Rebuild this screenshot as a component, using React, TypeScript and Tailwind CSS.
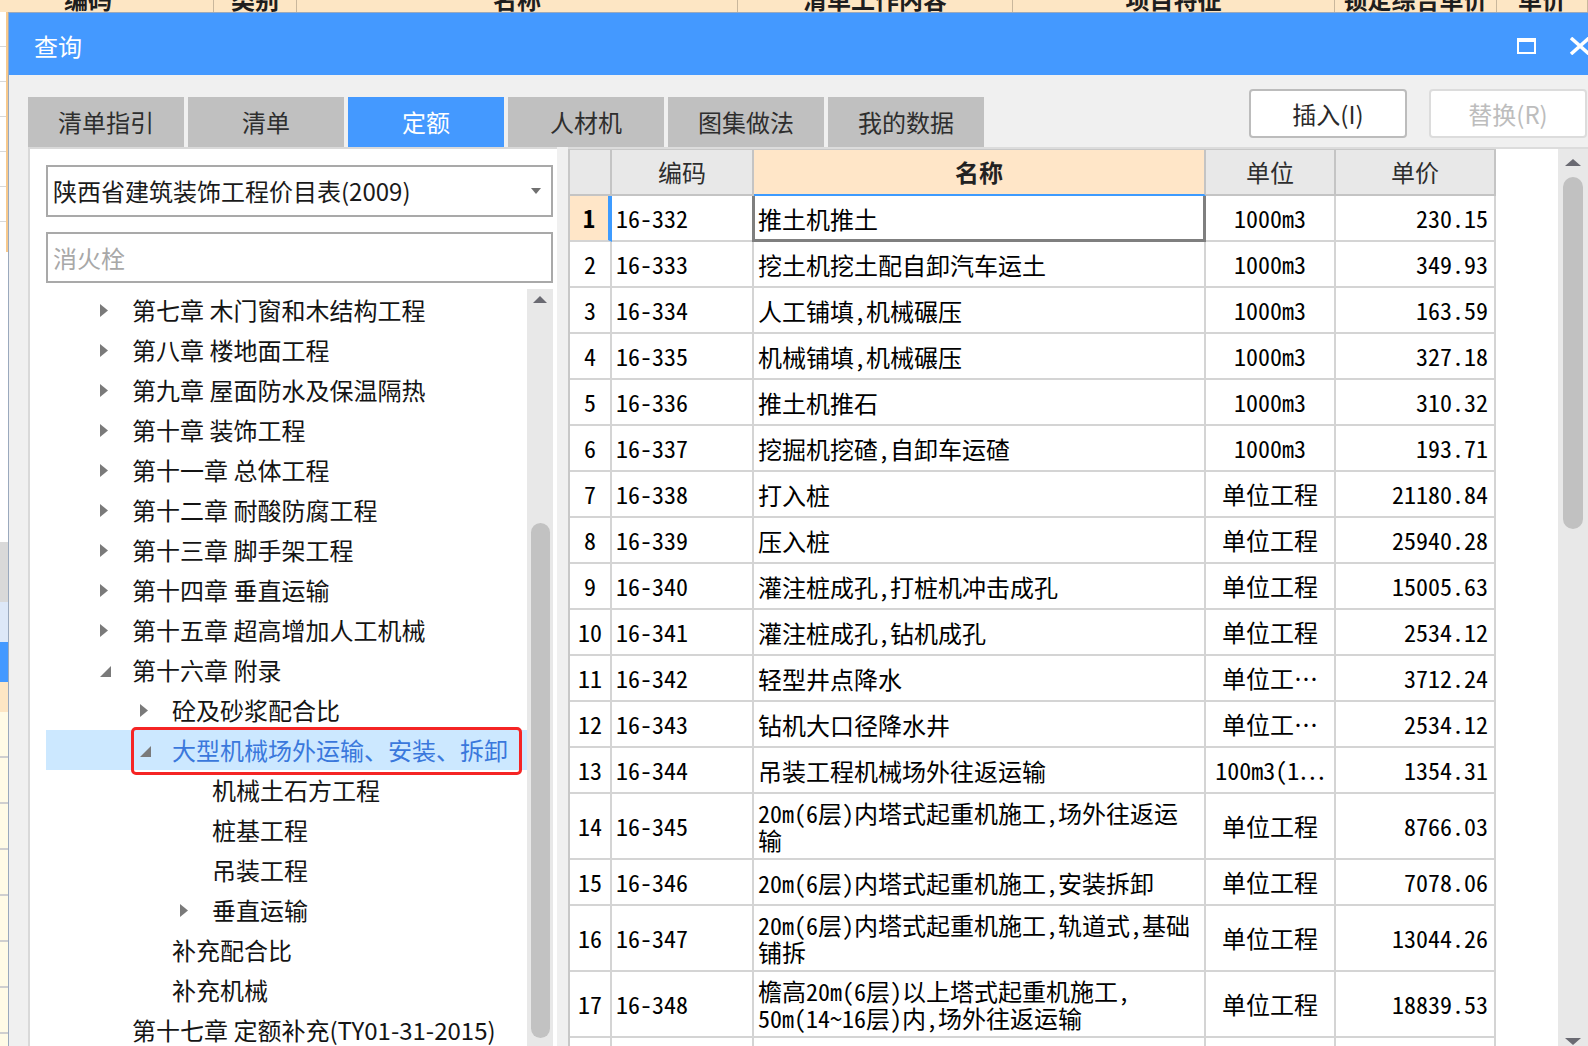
import React from "react";

const tabs = ["清单指引", "清单", "定额", "人材机", "图集做法", "我的数据"];

type TreeItem = { l: number; a: "r" | "d" | "n"; t: string; sel?: boolean };

const tree: TreeItem[] = [
  { l: 0, a: "r", t: "第七章 木门窗和木结构工程" },
  { l: 0, a: "r", t: "第八章 楼地面工程" },
  { l: 0, a: "r", t: "第九章 屋面防水及保温隔热" },
  { l: 0, a: "r", t: "第十章 装饰工程" },
  { l: 0, a: "r", t: "第十一章 总体工程" },
  { l: 0, a: "r", t: "第十二章 耐酸防腐工程" },
  { l: 0, a: "r", t: "第十三章 脚手架工程" },
  { l: 0, a: "r", t: "第十四章 垂直运输" },
  { l: 0, a: "r", t: "第十五章 超高增加人工机械" },
  { l: 0, a: "d", t: "第十六章 附录" },
  { l: 1, a: "r", t: "砼及砂浆配合比" },
  { l: 1, a: "d", t: "大型机械场外运输、安装、拆卸", sel: true },
  { l: 2, a: "n", t: "机械土石方工程" },
  { l: 2, a: "n", t: "桩基工程" },
  { l: 2, a: "n", t: "吊装工程" },
  { l: 2, a: "r", t: "垂直运输" },
  { l: 1, a: "n", t: "补充配合比" },
  { l: 1, a: "n", t: "补充机械" },
  { l: 0, a: "n", t: "第十七章 定额补充(TY01-31-2015)" },
];

type Row = { code: string; name: string; unit: string; price: string };

const rows: Row[] = [
  { code: "16-332", name: "推土机推土", unit: "1000m3", price: "230.15" },
  { code: "16-333", name: "挖土机挖土配自卸汽车运土", unit: "1000m3", price: "349.93" },
  { code: "16-334", name: "人工铺填,机械碾压", unit: "1000m3", price: "163.59" },
  { code: "16-335", name: "机械铺填,机械碾压", unit: "1000m3", price: "327.18" },
  { code: "16-336", name: "推土机推石", unit: "1000m3", price: "310.32" },
  { code: "16-337", name: "挖掘机挖碴,自卸车运碴", unit: "1000m3", price: "193.71" },
  { code: "16-338", name: "打入桩", unit: "单位工程", price: "21180.84" },
  { code: "16-339", name: "压入桩", unit: "单位工程", price: "25940.28" },
  { code: "16-340", name: "灌注桩成孔,打桩机冲击成孔", unit: "单位工程", price: "15005.63" },
  { code: "16-341", name: "灌注桩成孔,钻机成孔", unit: "单位工程", price: "2534.12" },
  { code: "16-342", name: "轻型井点降水", unit: "单位工…", price: "3712.24" },
  { code: "16-343", name: "钻机大口径降水井", unit: "单位工…", price: "2534.12" },
  { code: "16-344", name: "吊装工程机械场外往返运输", unit: "100m3(1…", price: "1354.31" },
  { code: "16-345", name: "20m(6层)内塔式起重机施工,场外往返运\n输", unit: "单位工程", price: "8766.03" },
  { code: "16-346", name: "20m(6层)内塔式起重机施工,安装拆卸", unit: "单位工程", price: "7078.06" },
  { code: "16-347", name: "20m(6层)内塔式起重机施工,轨道式,基础\n铺拆", unit: "单位工程", price: "13044.26" },
  { code: "16-348", name: "檐高20m(6层)以上塔式起重机施工,\n50m(14~16层)内,场外往返运输", unit: "单位工程", price: "18839.53" },
  { code: "16-349", name: "檐高20m(6层)以上塔式起重机施工,\n50m(14~16层)内,安装拆卸", unit: "单位工程", price: "15263.40" },
];

const padByLevel = ["pl-[50px]", "pl-[90px]", "pl-[130px]"];

function RightArrow() {
  return (
    <svg width="8" height="13" viewBox="0 0 8 13">
      <polygon points="0,0 8,6.5 0,13" fill="#7a7a7a" />
    </svg>
  );
}

function DownArrow() {
  return (
    <svg width="11" height="11" viewBox="0 0 11 11" className="mt-[3px]">
      <polygon points="11,0 11,11 0,11" fill="#7a7a7a" />
    </svg>
  );
}

function TopStrip() {
  const cols = [
    { w: "w-[214px]", t: "编码", c: "justify-start pl-[64px]" },
    { w: "w-[83px]", t: "类别", c: "justify-center" },
    { w: "w-[441px]", t: "名称", c: "justify-center" },
    { w: "w-[275px]", t: "清单工作内容", c: "justify-center" },
    { w: "w-[322px]", t: "项目特征", c: "justify-center" },
    { w: "w-[162px]", t: "锁定综合单价", c: "justify-center" },
    { w: "w-[91px]", t: "单价", c: "justify-center" },
  ];
  return (
    <div className="flex h-[12px] overflow-hidden bg-[#fde6c4]">
      {cols.map((c, i) => (
        <div key={i} className={`flex ${c.w} ${c.c} shrink-0 border-r border-[#c9b79c]`}>
          <span className="mt-[-13px] text-[24px] font-bold leading-[24px] text-[#1e1e1e]">{c.t}</span>
        </div>
      ))}
    </div>
  );
}

function LeftStrip() {
  return (
    <div className="flex w-[8px] flex-col">
      <div className="h-[240px] border-r-2 border-[#f7c98c] bg-[repeating-linear-gradient(to_bottom,#ffffff_0px,#ffffff_34px,#d8d8d8_34px,#d8d8d8_35px)]" />
      <div className="h-[290px] bg-white" />
      <div className="h-[60px] bg-[#d9d9d9]" />
      <div className="h-[40px] bg-[#dde8f8]" />
      <div className="h-[40px] bg-[#4499ff]" />
      <div className="h-[30px] bg-[#fde6c4]" />
      <div className="flex-1 bg-[repeating-linear-gradient(to_bottom,#fffbe6_0px,#fffbe6_44px,#cfcfcf_44px,#cfcfcf_46px)]" />
    </div>
  );
}

function TreeRow({ item }: { item: TreeItem }) {
  return (
    <div
      className={`relative flex h-[40px] items-center ${padByLevel[item.l]} ${
        item.sel ? "bg-[#cce8ff]" : ""
      }`}
    >
      <div className="flex w-[20px] items-center pl-[4px]">
        {item.a === "r" && <RightArrow />}
        {item.a === "d" && <DownArrow />}
      </div>
      <span
        className={`ml-[16px] whitespace-nowrap text-[24px] leading-[40px] ${
          item.sel ? "text-[#3a78dc]" : "text-[#141414]"
        }`}
      >
        {item.t}
      </span>
      {item.sel && (
        <div className="pointer-events-none absolute bottom-[-5px] left-[85px] right-[5px] top-[-3px] rounded-[5px] border-[3px] border-[#f52424]" />
      )}
    </div>
  );
}

const mono = "font-['Noto_Sans_Mono_CJK_SC','Noto_Sans_CJK_SC',monospace]";

function DataRow({ r, idx }: { r: Row; idx: number }) {
  const tall = r.name.includes("\n");
  const h = tall ? "h-[66px]" : "h-[46px]";
  const first = idx === 0;
  const cell = "border-b-2 border-r-2 border-[#d4d4d4] flex items-center shrink-0";
  return (
    <div className={`flex ${h}`}>
      <div
        className={`${cell} w-[42px] justify-center ${
          first ? "border-r-4 border-r-[#3d9bff] bg-[#ffe6c8] font-bold" : "bg-white"
        }`}
      >
        {idx + 1}
      </div>
      <div className={`${cell} w-[142px] pl-[4px]`}>{r.code}</div>
      <div className={`${cell} relative w-[452px] whitespace-pre-line pl-[4px] pr-[8px] leading-[27px]`}>
        {r.name}
        {first && (
          <div className="absolute -bottom-[2px] -left-[2px] -right-[2px] top-0 border-[3px] border-t-0 border-[#7f7f7f]" />
        )}
      </div>
      <div className={`${cell} w-[130px] justify-center whitespace-nowrap`}>{r.unit}</div>
      <div className={`${cell} w-[160px] justify-end pr-[6px]`}>{r.price}</div>
    </div>
  );
}

export default function App() {
  const hcell = "border-b-2 border-r-2 border-[#c4c4c4] flex items-center justify-center shrink-0 bg-[#e8e8e8]";
  return (
    <div className="relative h-[1046px] w-[1588px] overflow-hidden bg-white font-['Noto_Sans_CJK_SC',sans-serif]">
      {/* background application */}
      <div className="flex h-full flex-col">
        <TopStrip />
        <div className="flex flex-1">
          <LeftStrip />
          <div className="flex-1 bg-white" />
        </div>
      </div>

      {/* dialog window */}
      <div className="absolute left-[8px] top-[12px] flex h-[1100px] w-[1600px] flex-col border-l border-t border-[#9aa9bd] bg-[#f0f0f0]">
        {/* title bar */}
        <div className="flex h-[62px] shrink-0 items-center bg-[#4499ff] pl-[25px] pr-[17px]">
          <span className="mt-[3px] text-[24px] text-white">查询</span>
          <div className="flex-1" />
          <div className="mt-[3px] h-[16px] w-[19px] border-2 border-t-4 border-white" />
          <svg width="22" height="18" viewBox="0 0 22 18" className="ml-[33px] mt-[3px]">
            <path d="M2 1 L20 17 M20 1 L2 17" stroke="#ffffff" strokeWidth="3.5" />
          </svg>
        </div>

        {/* tabs and buttons */}
        <div className="flex h-[72px] shrink-0 items-start pl-[19px] pt-[14px]">
          <div className="mt-[8px] flex gap-[4px]">
            {tabs.map((t) => (
              <div
                key={t}
                className={`flex h-[50px] w-[156px] items-center justify-center text-[24px] ${
                  t === "定额" ? "bg-[#4499ff] text-white" : "bg-[#c0c0c0] text-[#2e2e2e]"
                }`}
              >
                {t}
              </div>
            ))}
          </div>
          <div className="ml-[265px] flex gap-[22px]">
            <div className="flex h-[49px] w-[158px] items-center justify-center rounded-[4px] border-2 border-[#bcbcbc] bg-white text-[24px] text-[#2a2a2a]">
              插入(I)
            </div>
            <div className="flex h-[49px] w-[158px] items-center justify-center rounded-[4px] border-2 border-[#dcdcdc] bg-white text-[24px] text-[#bdbdbd]">
              替换(R)
            </div>
          </div>
        </div>

        {/* content */}
        <div className="flex flex-1 pl-[19px]">
          {/* left panel */}
          <div className="flex w-[529px] shrink-0 flex-col border-l-2 border-t-2 border-[#d9d9d9] bg-white pl-[16px] pt-[16px]">
            <div className="flex h-[52px] w-[507px] items-center border-2 border-[#a9a9a9] bg-white pl-[5px] pr-[10px]">
              <span className="flex-1 whitespace-nowrap text-[24px] text-[#1a1a1a]">陕西省建筑装饰工程价目表(2009)</span>
              <svg width="10" height="6" viewBox="0 0 10 6">
                <polygon points="0,0 10,0 5,6" fill="#707070" />
              </svg>
            </div>
            <div className="mt-[15px] flex h-[51px] w-[507px] items-center border-2 border-[#a9a9a9] bg-white pl-[5px]">
              <span className="text-[24px] text-[#a8a8a8]">消火栓</span>
            </div>
            <div className="mt-[6px] flex">
              <div className="w-[481px] shrink-0 pt-[1px]">
                {tree.map((it, i) => (
                  <TreeRow key={i} item={it} />
                ))}
              </div>
              <div className="flex h-[800px] w-[26px] shrink-0 flex-col items-center bg-[#e8e8e8] pt-[7px]">
                <svg width="14" height="7" viewBox="0 0 14 7">
                  <polygon points="0,7 14,7 7,0" fill="#6a6a72" />
                </svg>
                <div className="mt-[220px] h-[515px] w-[19px] rounded-full bg-[#c2c2c2]" />
              </div>
            </div>
          </div>

          {/* table area */}
          <div className={`ml-[11px] flex w-[1040px] shrink-0 border-t-2 border-[#dcdcdc] bg-white text-[24px] text-black ${mono}`}>
            <div className="flex w-[928px] shrink-0 flex-col border-l-2 border-t border-[#c8c8c8]">
              <div className="flex h-[46px] text-[#2e2e2e]">
                <div className={`${hcell} w-[42px]`} />
                <div className={`${hcell} w-[142px]`}>编码</div>
                <div className={`${hcell} w-[452px] border-b-[#3d9bff] bg-[#ffe6c8] font-bold text-[#222]`}>名称</div>
                <div className={`${hcell} w-[130px]`}>单位</div>
                <div className={`${hcell} w-[160px]`}>单价</div>
              </div>
              {rows.map((r, i) => (
                <DataRow key={i} r={r} idx={i} />
              ))}
            </div>
            <div className="w-[62px] shrink-0" />
            <div className="flex h-[920px] w-[30px] shrink-0 flex-col items-center bg-[#e8e8e8] pt-[10px]">
              <svg width="16" height="7" viewBox="0 0 16 7">
                <polygon points="0,7 16,7 8,0" fill="#6a6a72" />
              </svg>
              <div className="mt-[11px] h-[352px] w-[20px] rounded-full bg-[#c1c1c1]" />
              <svg width="16" height="7" viewBox="0 0 16 7" className="mt-[509px]">
                <polygon points="0,0 16,0 8,7" fill="#6a6a72" />
              </svg>
            </div>
          </div>
        </div>
      </div>
    </div>
  );
}
